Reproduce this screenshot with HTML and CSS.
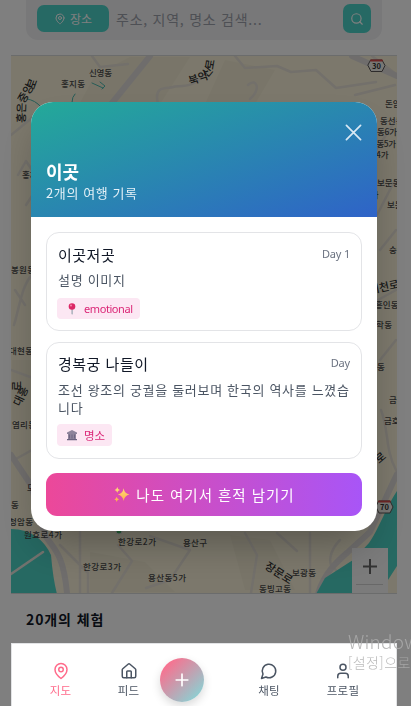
FILE: index.html
```html
<!DOCTYPE html>
<html lang="ko">
<head>
<meta charset="utf-8">
<title>지도</title>
<link rel="stylesheet" href="styles.css">
</head>
<body>
<div class="page">
  <div class="search">
    <span class="search-type">
      <svg class="pin" viewBox="0 0 24 24"><path d="M20 10c0 6-8 12-8 12s-8-6-8-12a8 8 0 0 1 16 0z"/><circle cx="12" cy="10" r="3"/></svg>
      <span>장소</span>
    </span>
    <span class="search-hint">주소, 지역, 명소 검색...</span>
    <span class="search-go"><svg viewBox="0 0 24 24"><circle cx="11" cy="11" r="8"/><path d="m21 21-4.3-4.3"/></svg></span>
  </div>
  <div class="map">
    <svg class="map-art" viewBox="11 56 386 537">
      <rect class="land" x="11" y="56" width="386" height="538"/>
      <g class="patch">
        <path d="M95 75l35-18h60l-35 55H75zM225 60l50 10-20 34h-50zM90 552l55 10 30 30H90zM230 535l40 5 25 50h-50zM12 360h20v60H12z"/>
      </g>
      <g class="street">
        <path d="M92 56l8 11 28-3M235 56l10 12 32-2 14 6 25-2 20 18 40-6M158 104c-5-20 10-15 15-17s20 2 30-12M248 85c8-8 14 4 2 14M11 135l22-18M18 175l8-14 8 12v20l-8 12M14 325c6-20 8-40 18-50M15 290l10 15M11 370l22 8M14 460l18-10M380 250l16-20M378 300l18-10M381 410c8 20 4 40 15 60M380 360l16-20M150 536l40 14-20 30-24 8M245 533l12 22-6 38M277 533l20 18M340 540c-10 10-14 25-4 30M80 531v62M310 533v60M118 545l14 16-20 32M60 545l28 28v20M376 150l20-30M377 215l18-35M372 56l24 18M355 95l40-10"/>
      </g>
      <g class="road">
        <path d="M150 56L108 108"/><path d="M11 455l20 30 14 50c8 14 18 16 22 58"/><path d="M318 594c6-22 22-35 30-42l22-20 27-58"/><path d="M352 56l45 20"/>
      </g>
      <path class="water" d="M11 529c20 0 34 12 40 26q2 24 6 39H11zM316 594l9-16 28-18 16-17c10-14 17-36 28-52v75l-18 28z"/>
      <path class="bridge" d="M11 574l32-22"/>
      <path class="stream" d="M27 99q8 1 14 8M72 102q0-5 3-8M92 83l11 5M100 82l5 4-3 3"/>
      <g class="label">
        <text x="89" y="76" textLength="23">신영동</text><text x="61" y="87" textLength="24">홍지동</text>
        <text x="22" y="178">홍제</text><text x="11" y="273" textLength="24">봉원동</text><text x="9" y="354" textLength="24">대현동</text>
        <text x="12" y="428" textLength="24">염리동</text><text x="27" y="491">도화동</text><text x="11" y="508">동</text><text x="9" y="525" textLength="24">청암동</text>
        <text x="24" y="538" textLength="38">원효로4가</text><text x="118" y="545" textLength="38">한강로2가</text><text x="183" y="546" textLength="24">용산구</text>
        <text x="83" y="570" textLength="38">한강로3가</text><text x="148" y="581" textLength="38">용산동5가</text><text x="292" y="576" textLength="24">보광동</text><text x="259" y="592" textLength="32">동빙고동</text>
        <text x="385" y="107">돈암동</text><text x="380" y="124">동선동</text><text x="377" y="135" textLength="20">동6가</text><text x="369" y="147" textLength="27">문동5가</text><text x="376" y="158">4가</text>
        <text x="377" y="186">보문동</text><text x="363" y="198">동가</text><text x="387" y="208">보문</text><text x="389" y="253">숭인</text><text x="375" y="308">흥인동</text><text x="376" y="328" textLength="16">학동</text><text x="377" y="370">동</text><text x="389" y="403">금호</text><text x="384" y="424">금호</text>
      </g>
      <g class="road-label">
        <text transform="translate(190 85) rotate(-18)">북악</text><text transform="translate(207 78) rotate(-50)">산</text><text transform="translate(213 70) rotate(-80)">로</text>
        <text transform="translate(25 123) rotate(-88)">홍은</text><text transform="translate(24 104) rotate(-60)">중앙</text><text transform="translate(34 90) rotate(-70)">로</text>
        <text transform="translate(20 407) rotate(-65)">대흥</text><text transform="translate(21 391) rotate(-90)">로</text><text transform="translate(264 568) rotate(33)">장문로</text><text transform="translate(370 294) rotate(-12)">계천로</text><text transform="translate(379 464) rotate(-40)">로</text>
      </g>
      <g class="shield"><path d="M371 60h11l3 5.500-3 6h-11l-3-6z"/><path class="shield-top" d="M371 60.500h11"/><text x="376.500" y="68.500">30</text></g>
      <g class="shield"><path d="M379 501h11l3 6-3 6h-11l-3-6z"/><path class="shield-top" d="M379 501.500h11"/><text x="384.500" y="510">70</text></g>
      <circle class="poi" cx="119" cy="531" r="3"/>
    </svg>
    <div class="zoom"><svg viewBox="0 0 36 45"><path d="M11 18.500h14M18 11v15"/><path class="zoom-line" d="M4 36.500h27"/></svg></div>
  </div>
  <h2 class="count">20개의 체험</h2>
</div>

<div class="backdrop">
  <section class="modal">
    <header class="modal-head">
      <svg class="close" viewBox="0 0 18 18"><path d="M1.500 1.500l15 15M16.500 1.500l-15 15"/></svg>
      <h1>이곳</h1>
      <p>2개의 여행 기록</p>
    </header>
    <div class="modal-body">
      <article class="card">
        <div class="card-top"><h3>이곳저곳</h3><span class="day">Day 1</span></div>
        <p class="desc">설명 이미지</p>
        <span class="tag"><svg class="tag-icon" viewBox="0 0 12 12"><path fill="#96a2ae" d="M5.500 5h1.200v5.500L6.100 12l-.6-1.500z"/><circle cx="6" cy="3.500" r="3.300" fill="#dc2866"/><circle cx="5" cy="2.500" r="1" fill="#f48aac"/></svg><span class="tag-en">emotional</span></span>
      </article>
      <article class="card card-second">
        <div class="card-top"><h3>경복궁 나들이</h3><span class="day">Day</span></div>
        <p class="desc">조선 왕조의 궁궐을 둘러보며 한국의 역사를 느꼈습<br>니다</p>
        <span class="tag"><svg class="tag-icon" viewBox="0 0 12 12"><path fill="#8e849b" d="M6 1l5 2.500V5H1V3.500zM2 5h8v5H2z"/><path fill="#6d6480" d="M3 5.500h1v4H3zM5.500 5.500h1v4h-1zM8 5.500h1v4H8zM1 10h10v1.300H1z"/></svg><span>명소</span></span>
      </article>
      <div class="cta">
        <svg class="spark" viewBox="0 0 16 16"><defs><linearGradient id="gold" x2="0" y2="1"><stop stop-color="#ffe07a"/><stop offset="1" stop-color="#ffac48"/></linearGradient></defs><path fill="url(#gold)" d="M10 2q.8 5 5.500 6-4.700 1-5.500 6Q9.200 9 4.500 8 9.200 7 10 2zM4 1q.4 2.200 2.500 2.700Q4.400 4.200 4 6.400 3.600 4.200 1.500 3.700 3.600 3.200 4 1zM3.500 10q.3 2 2.200 2.500Q3.800 13 3.500 15q-.3-2-2.200-2.500Q3.200 12 3.500 10z"/></svg>
        <span>나도 여기서 흔적 남기기</span>
      </div>
    </div>
  </section>
</div>

<nav class="nav">
  <div class="tab tab-on"><svg viewBox="0 0 24 24"><path d="M20 10c0 6-8 12-8 12s-8-6-8-12a8 8 0 0 1 16 0z"/><circle cx="12" cy="10" r="3"/></svg><span>지도</span></div>
  <div class="tab"><svg viewBox="0 0 24 24"><path d="M3 10.500a2 2 0 0 1 .7-1.500l7-6a2 2 0 0 1 2.600 0l7 6a2 2 0 0 1 .7 1.500V19a2 2 0 0 1-2 2H5a2 2 0 0 1-2-2z"/><path d="M9 21v-8a1 1 0 0 1 1-1h4a1 1 0 0 1 1 1v8"/></svg><span>피드</span></div>
  <div class="add"><svg viewBox="0 0 24 24"><path d="M5 12h14M12 5v14"/></svg></div>
  <div class="tab"><svg viewBox="0 0 24 24"><path d="M7.900 20A9 9 0 1 0 4 16.100L2 22z"/></svg><span>채팅</span></div>
  <div class="tab"><svg viewBox="0 0 24 24"><circle cx="12" cy="7" r="4"/><path d="M19 21v-2a4 4 0 0 0-4-4H9a4 4 0 0 0-4 4v2"/></svg><span>프로필</span></div>
</nav>

<div class="watermark"><div class="wm-title">Windows</div><div class="wm-sub">[설정]으로</div></div>
</body>
</html>
```
FILE: styles.css
```css
* { box-sizing: border-box; margin: 0; padding: 0; }
html, body { width: 411px; height: 706px; overflow: hidden; background: #fff; }
body { font-family: "Noto Sans CJK KR", "Noto Sans", sans-serif; }
svg { display: block; fill: none; stroke: currentColor; stroke-width: 2; stroke-linecap: round; stroke-linejoin: round; }
span, h1, h2, h3, p { white-space: nowrap; }

.page { width: 386px; margin-left: 11px; }
.search { display: flex; align-items: center; height: 40px; margin: 0 15px; padding: 0 11px; background: #f1f1f2; border-radius: 0 0 12px 12px; }
.search-type { display: flex; align-items: center; justify-content: center; gap: 4px; width: 72px; height: 27px; margin-top: -3px; border-radius: 7px; background: #4dd2c8; color: #fff; font-size: 12px; }
.search-type svg { width: 12px; height: 12px; }
.search-hint { flex: 1; margin-left: 7px; margin-top: -3px; font-size: 14px; line-height: 20px; letter-spacing: .75px; color: #9ca0aa; }
.search-go { display: flex; align-items: center; justify-content: center; width: 28px; height: 29px; margin-top: -3px; border-radius: 7px; background: #4dd2c8; color: #fff; }
.search-go svg { width: 14px; height: 14px; }

.map { position: relative; height: 539px; margin-top: 15px; border-top: 1px solid #d6d8d8; border-bottom: 1px solid #d6d8d8; }
.map-art { width: 386px; height: 537px; stroke: none; }
.land { fill: #f8f1d8; }
.patch { fill: #f2ebd2; }
.street { fill: none; stroke: #e6e0d6; stroke-width: 2.500; }
.road { fill: none; stroke: #dfdbd9; stroke-width: 6; }
.water { fill: #4dd2c5; }
.bridge { stroke: #e5e5dc; stroke-width: 2.500; }
.stream { stroke: #4db8ae; stroke-width: 1; }
.label text { font-size: 8.500px; font-weight: 500; fill: #484848; }
.road-label text { font-size: 11px; font-weight: 500; fill: #303030; }
.shield { fill: #f0eee8; stroke: #5a5656; stroke-width: 1; }
.shield text { fill: #333; stroke: none; font-size: 7.500px; font-weight: 700; text-anchor: middle; }
.shield-top { stroke: #d84a4a; stroke-width: 2; }
.poi { fill: #48b868; stroke: #ddd; stroke-width: 1; }
.zoom { position: absolute; right: 9px; bottom: 0; width: 36px; height: 45px; background: #f6f6f6; color: #666; }
.zoom svg { stroke-linecap: butt; }
.zoom .zoom-line { stroke: #d0d0d0; stroke-width: 1; }
.count { margin: 14px 0 0 15px; font-size: 14px; line-height: 22px; font-weight: 700; letter-spacing: .9px; color: #111827; }

.backdrop { position: fixed; inset: 0; display: flex; align-items: flex-start; padding: 102px 0 0 31px; background: rgba(0, 0, 0, .5); }
.modal { width: 346px; height: 429px; overflow: hidden; border-radius: 22px; background: #fff; box-shadow: 0 20px 40px -10px rgba(0, 0, 0, .3); }
.modal-head { display: flex; flex-direction: column; height: 115px; padding: 22px 15px 0; color: #fff; background: linear-gradient(to bottom right, #23aa98, #2f63c8); }
.close { align-self: flex-end; width: 17px; height: 17px; color: #d8e8f4; stroke-width: 1.800; }
.modal-head h1 { margin-top: 17px; font-size: 18px; line-height: 26px; font-weight: 700; }
.modal-head p { font-size: 13px; line-height: 18px; letter-spacing: .6px; color: #e3f0f7; }
.modal-body { padding: 15px; }
.card { height: 99px; padding: 12px 11px 0; border: 1px solid #e3e4e7; border-radius: 13px; }
.card-second { height: 117px; margin-top: 11px; padding-top: 11px; }
.card-top { display: flex; justify-content: space-between; height: 22px; }
.card h3 { font-size: 15px; line-height: 20px; font-weight: 400; letter-spacing: .5px; color: #111827; }
.day { font-family: "Noto Sans", sans-serif; font-size: 11px; line-height: 18px; letter-spacing: -.2px; color: #6b7280; }
.desc { margin-top: 4px; font-size: 13px; line-height: 18px; color: #4b5563; letter-spacing: .69px; }
.card-second .desc { margin-top: 5px; }
.tag { display: inline-flex; align-items: center; height: 21px; margin: 9px 0 0 -1px; padding: 0 7px 0 9px; gap: 6px; border-radius: 4px; background: #fce7f3; color: #db2777; font-size: 11.500px; }
.card-second .tag { margin-top: 7px; height: 22px; }
.tag-icon { width: 12px; height: 12px; stroke: none; }
.tag-en { font-family: "Noto Sans", sans-serif; font-size: 11px; letter-spacing: -.42px; }
.cta { display: flex; align-items: center; justify-content: center; gap: 6px; height: 43px; margin-top: 14px; border-radius: 11px; color: #fff; font-size: 14.500px; letter-spacing: .98px; background: linear-gradient(90deg, #ec4899, #a855f7); }
.spark { width: 17px; height: 17px; stroke: none; }

.nav { position: fixed; left: 11px; top: 643px; display: grid; grid-template-columns: 97px 39px 70px 102px 46px; width: 386px; height: 63px; border: 1px solid #e2e3e5; border-bottom: 0; background: #fff; color: #4b5563; }
.tab { display: flex; flex-direction: column; align-items: center; padding-top: 18px; font-size: 11.500px; line-height: 17px; letter-spacing: .2px; }
.tab svg { width: 18px; height: 18px; margin-bottom: 2px; }
.tab-on { color: #ff6b8b; }
.add { display: flex; align-items: center; justify-content: center; width: 44px; height: 44px; margin: 14px 0 0 12px; border-radius: 50%; color: #fff; background: linear-gradient(135deg, #ff6b8b 10%, #86d5d6 92%); box-shadow: 0 4px 10px rgba(0, 0, 0, .15); }
.add svg { width: 20px; height: 20px; }
.watermark { position: fixed; left: 348px; top: 629px; width: 63px; overflow: hidden; font-family: "Noto Sans CJK KR", sans-serif; font-weight: 300; color: rgba(172, 172, 172, .85); white-space: nowrap; }
.wm-title { font-size: 19px; line-height: 23px; letter-spacing: .2px; }
.wm-sub { font-size: 14px; line-height: 20px; letter-spacing: .4px; }
```
